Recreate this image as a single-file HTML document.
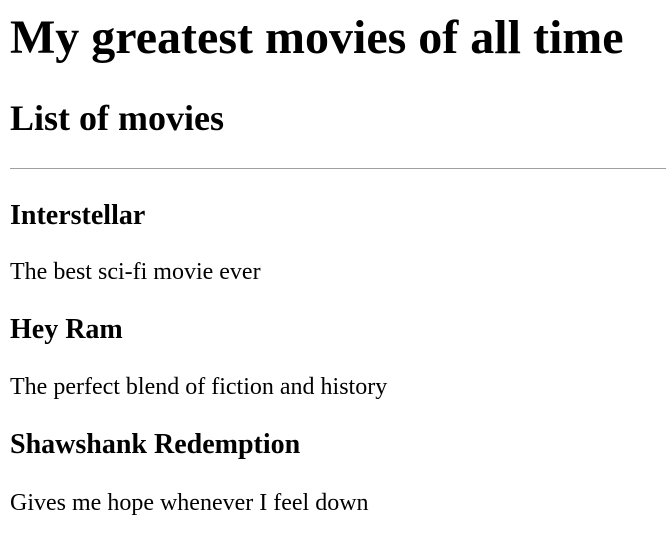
<!DOCTYPE html>
<html><head><meta charset="utf-8"><style>
html,body{margin:0;padding:0;background:#fff;width:666px;height:555px;overflow:hidden;}
body{font-family:"Liberation Serif","Times New Roman",serif;color:#000;position:relative;}
.t{position:absolute;left:10px;height:0;line-height:0;white-space:nowrap;}
.b{font-weight:bold;}
hr{position:absolute;left:10px;top:168px;width:656px;margin:0;border:0;border-top:1px solid #a0a0a0;height:0;}
</style></head><body>
<div class="t b" style="font-size:48px;top:38px">My greatest movies of all time</div>
<div class="t b" style="font-size:36px;top:118px">List of movies</div>
<hr>
<div class="t b" style="font-size:28px;top:216px">Interstellar</div>
<div class="t" style="font-size:24px;top:272px">The best sci-fi movie ever</div>
<div class="t b" style="font-size:28px;top:330px">Hey Ram</div>
<div class="t" style="font-size:24px;top:387px">The perfect blend of fiction and history</div>
<div class="t b" style="font-size:28px;top:445px">Shawshank Redemption</div>
<div class="t" style="font-size:24px;top:503px">Gives me hope whenever I feel down</div>
</body></html>
